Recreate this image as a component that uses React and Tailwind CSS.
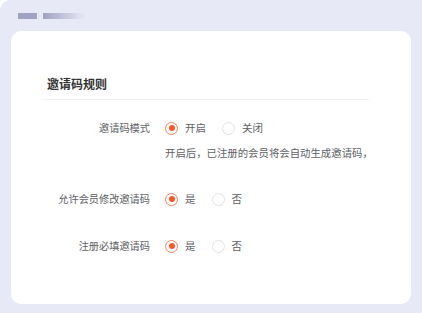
import React from 'react'

const Radio = ({ checked, label }) => (
  <label className="flex items-center gap-[7px] cursor-pointer">
    <span
      className={`flex h-[13px] w-[13px] items-center justify-center rounded-full border ${
        checked ? 'border-[#f7835c]' : 'border-[#e3e3e6]'
      } bg-white`}
    >
      {checked && <span className="h-[6px] w-[6px] rounded-full bg-[#f5592a]" />}
    </span>
    <span className="text-[10.5px] text-[#606266]">{label}</span>
  </label>
)

const Row = ({ label, options, value, className = '', children }) => (
  <div className={className}>
    <div className="flex h-5 items-center">
      <div className="w-[107px] whitespace-nowrap text-right text-[10.2px] leading-5 text-[#606266]">{label}</div>
      <div className="ml-[15px] flex items-center gap-[16px]">
        {options.map((o) => (
          <Radio key={o} label={o} checked={o === value} />
        ))}
      </div>
    </div>
    {children}
  </div>
)

export default function App() {
  return (
    <div
      className="h-[313px] w-[422px] bg-white"
      style={{ fontFamily: '"Noto Sans CJK SC", "Noto Sans", sans-serif' }}
    >
      <div className="flex h-full flex-col rounded-tl-[11px] bg-[#e8e9f7] pl-[11px] pr-[11px] pb-[9px]">
        <div className="flex h-[31px] items-start gap-[6px] pl-[7px] pt-[13px]">
          <div className="h-[6px] w-[19px] bg-[#a0a2c2]" />
          <div className="h-[6px] w-[42px] bg-gradient-to-r from-[#a0a2c2] to-[#e8e9f7]" />
        </div>
        <div className="flex-1 rounded-[10px] bg-white pl-8 pr-[42px] pt-[43px]">
          <div className="mb-[5px] h-5 pl-1 text-[12px] font-bold leading-5 text-[#333]">邀请码规则</div>
          <div className="border-t border-[#f0f0f2]" />
          <Row className="mt-[18px]" label="邀请码模式" options={['开启', '关闭']} value="开启">
            <div className="mt-[5px] pl-[122px] text-[10.4px] leading-5 text-[#606266] whitespace-nowrap">
              开启后，已注册的会员将会自动生成邀请码，
            </div>
          </Row>
          <Row className="mt-[26px]" label="允许会员修改邀请码" options={['是', '否']} value="是" />
          <Row className="mt-[27px]" label="注册必填邀请码" options={['是', '否']} value="是" />
        </div>
      </div>
    </div>
  )
}
